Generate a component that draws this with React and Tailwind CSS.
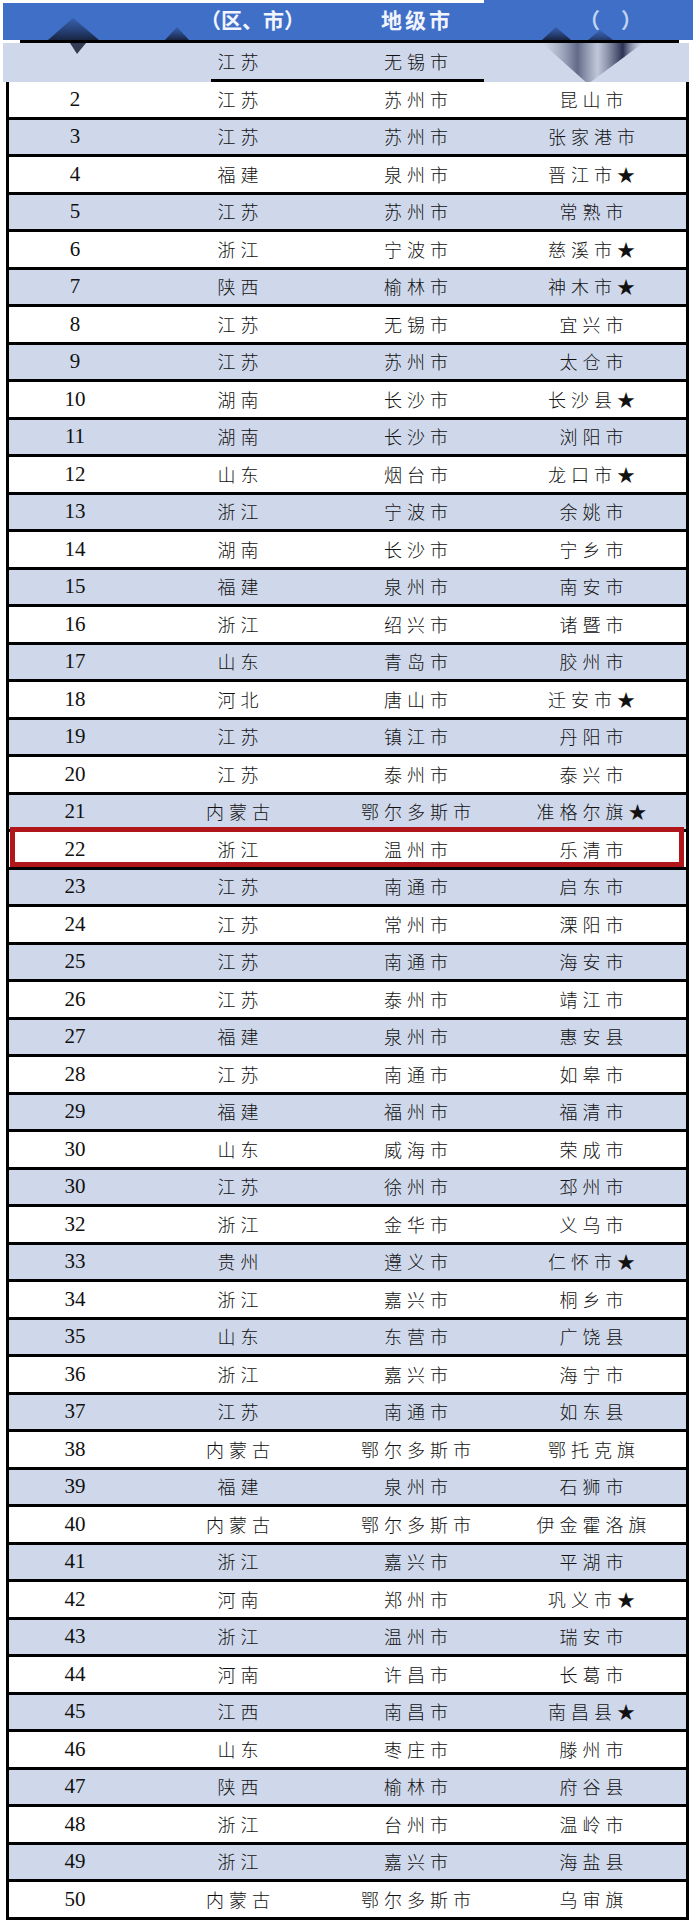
import React from 'react'

const rows = [
  ['2', '江苏', '苏州市', '昆山市'],
  ['3', '江苏', '苏州市', '张家港市'],
  ['4', '福建', '泉州市', '晋江市★'],
  ['5', '江苏', '苏州市', '常熟市'],
  ['6', '浙江', '宁波市', '慈溪市★'],
  ['7', '陕西', '榆林市', '神木市★'],
  ['8', '江苏', '无锡市', '宜兴市'],
  ['9', '江苏', '苏州市', '太仓市'],
  ['10', '湖南', '长沙市', '长沙县★'],
  ['11', '湖南', '长沙市', '浏阳市'],
  ['12', '山东', '烟台市', '龙口市★'],
  ['13', '浙江', '宁波市', '余姚市'],
  ['14', '湖南', '长沙市', '宁乡市'],
  ['15', '福建', '泉州市', '南安市'],
  ['16', '浙江', '绍兴市', '诸暨市'],
  ['17', '山东', '青岛市', '胶州市'],
  ['18', '河北', '唐山市', '迁安市★'],
  ['19', '江苏', '镇江市', '丹阳市'],
  ['20', '江苏', '泰州市', '泰兴市'],
  ['21', '内蒙古', '鄂尔多斯市', '准格尔旗★'],
  ['22', '浙江', '温州市', '乐清市'],
  ['23', '江苏', '南通市', '启东市'],
  ['24', '江苏', '常州市', '溧阳市'],
  ['25', '江苏', '南通市', '海安市'],
  ['26', '江苏', '泰州市', '靖江市'],
  ['27', '福建', '泉州市', '惠安县'],
  ['28', '江苏', '南通市', '如皋市'],
  ['29', '福建', '福州市', '福清市'],
  ['30', '山东', '威海市', '荣成市'],
  ['30', '江苏', '徐州市', '邳州市'],
  ['32', '浙江', '金华市', '义乌市'],
  ['33', '贵州', '遵义市', '仁怀市★'],
  ['34', '浙江', '嘉兴市', '桐乡市'],
  ['35', '山东', '东营市', '广饶县'],
  ['36', '浙江', '嘉兴市', '海宁市'],
  ['37', '江苏', '南通市', '如东县'],
  ['38', '内蒙古', '鄂尔多斯市', '鄂托克旗'],
  ['39', '福建', '泉州市', '石狮市'],
  ['40', '内蒙古', '鄂尔多斯市', '伊金霍洛旗'],
  ['41', '浙江', '嘉兴市', '平湖市'],
  ['42', '河南', '郑州市', '巩义市★'],
  ['43', '浙江', '温州市', '瑞安市'],
  ['44', '河南', '许昌市', '长葛市'],
  ['45', '江西', '南昌市', '南昌县★'],
  ['46', '山东', '枣庄市', '滕州市'],
  ['47', '陕西', '榆林市', '府谷县'],
  ['48', '浙江', '台州市', '温岭市'],
  ['49', '浙江', '嘉兴市', '海盐县'],
  ['50', '内蒙古', '鄂尔多斯市', '乌审旗'],
]

const cjk = "font-['Noto_Sans_CJK_SC',sans-serif] font-light text-[18px] tracking-[5px] pl-[5px] text-[#111] text-center"
const num = "font-['Liberation_Serif','Times_New_Roman',serif] text-[21px] text-[#111] text-center"

// the smudged diamond shapes left over in the scanned header
function HeaderSmudges() {
  return (
    <svg className="absolute left-0 top-0 pointer-events-none" width="696" height="90" viewBox="0 0 696 90">
      <defs>
        <linearGradient id="mt" x1="0" y1="0" x2="0" y2="1">
          <stop offset="0" stopColor="#1d2f5c" stopOpacity="0.25" />
          <stop offset="1" stopColor="#141c33" stopOpacity="0.9" />
        </linearGradient>
        <linearGradient id="vee" x1="0" y1="0" x2="1" y2="0">
          <stop offset="0" stopColor="#cfd6e6" stopOpacity="0.4" />
          <stop offset="0.35" stopColor="#4d5675" stopOpacity="0.85" />
          <stop offset="0.55" stopColor="#b8bfd2" stopOpacity="0.7" />
          <stop offset="0.8" stopColor="#20274a" stopOpacity="0.95" />
          <stop offset="1" stopColor="#cfd6e6" stopOpacity="0.3" />
        </linearGradient>
      </defs>
      <polygon points="48,40 73,18 99,40" fill="url(#mt)" />
      <polygon points="70,43 86,43 77,54" fill="#1a2038" opacity="0.85" />
      <polygon points="165,40 177,27 189,40" fill="url(#mt)" />
      <polygon points="542,40 556,27 571,40" fill="url(#mt)" />
      <polygon points="588,40 600,30 613,40" fill="url(#mt)" opacity="0.7" />
      <polygon points="542,43 643,43 588,84" fill="url(#vee)" />
    </svg>
  )
}

export default function App() {
  return (
    <div className="w-[696px] bg-white pb-[3px]">
      <div className="relative">
        <div className="relative h-[40px] ml-[3px] mr-[3px] bg-[#3f6fc6] flex items-center font-['Noto_Sans_CJK_SC',sans-serif] font-bold text-[21px] text-[#f2f5ff]">
          <div className="absolute left-[-3px] top-0 h-[3px] w-[484px] bg-white" />
          <span className="ml-[197px]">（区、市）</span>
          <span className="ml-[76px] tracking-[3px]">地级市</span>
          <span className="ml-[126px] text-[#e8eeff]/80">（　）</span>
        </div>
        <div className="ml-[20px] w-[659px] h-[3px] bg-black" />
        <div className="ml-[3px] w-[686px] bg-[#cfd8ea]">
          <div className="h-[36px] grid grid-cols-[138px_194px_162px_192px] items-center">
            <div />
            <div className={cjk}>江苏</div>
            <div className={cjk}>无锡市</div>
            <div />
          </div>
          <div className="ml-[208px] w-[273px] h-[3px] bg-black" />
        </div>
        <HeaderSmudges />
      </div>

      <div className="ml-[6px] w-[683px] border-x-[3px] border-black">
        {rows.map((r, i) => (
          <div
            key={i}
            className={`relative h-[37.5px] border-b-[3px] border-black grid grid-cols-[132px_194px_162px_189px] items-center ${
              i % 2 === 0 ? 'bg-white' : 'bg-[#cfd8ea]'
            }`}
          >
            <div className={num}>{r[0]}</div>
            <div className={cjk}>{r[1]}</div>
            <div className={cjk}>{r[2]}</div>
            <div className={cjk}>{r[3]}</div>
            {r[0] === '22' && (
              <div className="absolute -top-[5px] left-[1px] right-[2px] bottom-0 border-[5px] border-[#b0161a]" />
            )}
          </div>
        ))}
      </div>
    </div>
  )
}
